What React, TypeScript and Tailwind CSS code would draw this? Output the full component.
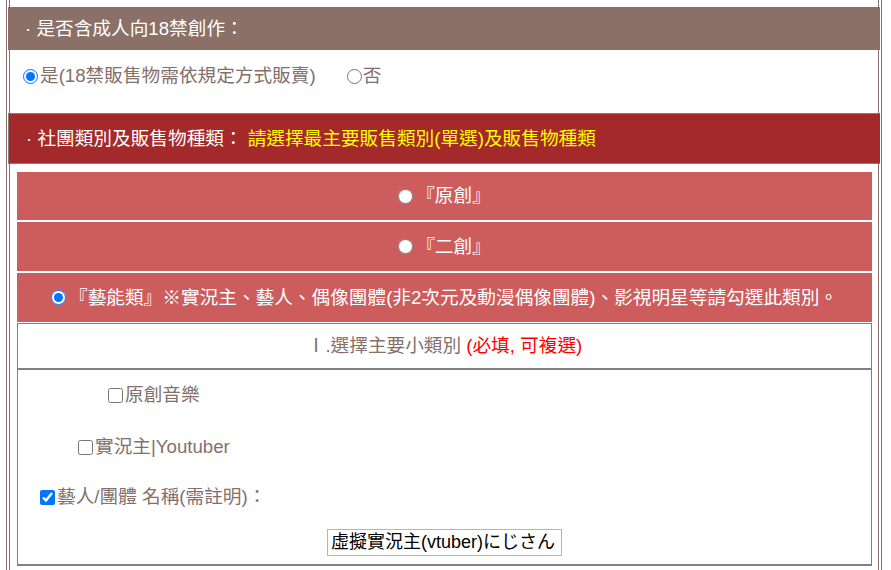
import React from 'react';

const ink = 'text-[#83706b]';

function RedRow({ checked, tall, children }: { checked?: boolean; tall?: boolean; children: React.ReactNode }) {
  return (
    <div className={`${tall ? 'h-[49px]' : 'h-[48px]'} bg-[#cd5c5c] flex items-center justify-center text-white text-[18.67px]`}>
      <input type="radio" name="club" defaultChecked={checked} className="m-0 mr-[3px] w-[15px] h-[15px]" />
      <span>{children}</span>
    </div>
  );
}

function Check({ label, checked, indent }: { label: string; checked?: boolean; indent: string }) {
  return (
    <label className={`h-[26px] flex items-center ${indent} ${ink} text-[18.67px]`}>
      <input type="checkbox" defaultChecked={checked} className="m-0 mr-[2px] w-[15px] h-[15px]" />
      <span>{label}</span>
    </label>
  );
}

export default function App() {
  return (
    <div className="min-h-[570px] bg-white font-['Liberation_Sans','Noto_Sans_CJK_TC',sans-serif]">
      <div className="ml-[6px] w-[876px] min-h-[570px] border-x border-[#8b6f68] px-[2px]">
        <div className="min-h-[570px] border-x border-[#8b6f68] pt-[7px]">
          {/* adult content */}
          <div className="-ml-[2px] -mr-[2px] h-[43px] bg-[#8b7068] flex items-center pl-[17px] text-white text-[18.67px]">
            · 是否含成人向18禁創作：
          </div>
          <div className={`h-[63px] pt-[12px] flex items-start ${ink} text-[18.67px]`}>
            <label className="flex items-center ml-[13px]">
              <input type="radio" name="adult" defaultChecked className="m-0 mr-[2px] w-[15px] h-[15px]" />
              <span>是(18禁販售物需依規定方式販賣)</span>
            </label>
            <label className="flex items-center ml-[31px]">
              <input type="radio" name="adult" className="m-0 mr-[1px] w-[15px] h-[15px]" />
              <span>否</span>
            </label>
          </div>

          {/* club type */}
          <div className="-ml-[2px] -mr-[2px] h-[51px] bg-[#a3292a] border-y border-l border-[#808080] flex items-center pl-[17px] text-[18.67px]">
            <span className="text-white">· 社團類別及販售物種類：</span>
            <span className="ml-[5px] text-[#ffff00]">請選擇最主要販售類別(單選)及販售物種類</span>
          </div>

          <div className="mt-[8px] ml-[7px] w-[855px] flex flex-col">
            <div className="flex flex-col gap-[2px]">
              <RedRow>『原創』</RedRow>
              <RedRow tall>『二創』</RedRow>
              <RedRow tall checked>『藝能類』※實況主、藝人、偶像團體(非2次元及動漫偶像團體)、影視明星等請勾選此類別。</RedRow>
            </div>
            <div className={`mt-[1px] h-[46px] border border-[#808080] flex items-center justify-center text-[18.67px] ${ink}`}>
              Ⅰ.選擇主要小類別 <span className="ml-[5px] text-[#ff0000]">(必填, 可複選)</span>
            </div>
            <div className="h-[197px] border-x border-t border-b-2 border-[#808080] pt-[12px] flex flex-col">
              <Check label="原創音樂" indent="ml-[90px]" />
              <div className="h-[26px]" />
              <Check label="實況主|Youtuber" indent="ml-[60px]" />
              <div className="h-[24px]" />
              <Check label="藝人/團體 名稱(需註明)：" checked indent="ml-[22px]" />
              <div className="h-[19px]" />
              <div className="flex justify-center">
                <input
                  type="text"
                  defaultValue="虛擬實況主(vtuber)にじさん"
                  className="w-[235px] h-[27px] border border-[#b5b5b5] px-[3px] text-black text-[18px] font-['Liberation_Sans','Noto_Sans_CJK_JP',sans-serif] outline-none"
                />
              </div>
            </div>
          </div>
        </div>
      </div>
    </div>
  );
}
